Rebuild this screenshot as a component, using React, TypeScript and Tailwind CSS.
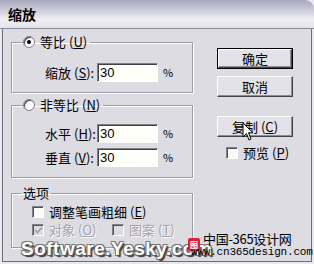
import type { ReactNode } from "react";

const cjk = "font-['Noto_Sans_CJK_SC',sans-serif]";

function Key({ k }: { k: string }) {
  return (
    <span className="ml-[3px]">
      (<span className="underline underline-offset-1">{k}</span>)
    </span>
  );
}

function Radio({ checked }: { checked?: boolean }) {
  return (
    <span className="flex h-[12px] w-[12px] items-center justify-center rounded-full border border-[#808088] bg-white shadow-[inset_1px_1px_0_#404048]">
      {checked && <span className="h-[4px] w-[4px] rounded-full bg-black" />}
    </span>
  );
}

function Check({ checked, disabled }: { checked?: boolean; disabled?: boolean }) {
  return (
    <span
      className={`flex h-[12px] w-[12px] items-center justify-center border border-t-[#808088] border-l-[#808088] border-r-white border-b-white shadow-[inset_1px_1px_0_#50505a] ${
        disabled ? "bg-[#dcdce2]" : "bg-[#fbfbf6]"
      }`}
    >
      {checked && (
        <svg width="9" height="9" viewBox="0 0 9 9">
          <path d="M1 4 L3.5 6.5 L8 1.5" fill="none" stroke={disabled ? "#9a9aa4" : "#000"} strokeWidth="1.6" />
        </svg>
      )}
    </span>
  );
}

function Field({ label, k }: { label: string; k: string }) {
  return (
    <div className="flex h-[19px] items-center pl-[33px]">
      <span className="w-[52px] whitespace-nowrap">
        {label}
        <Key k={k} />:
      </span>
      <div className="flex h-[19px] w-[61px] items-center border border-t-[#808088] border-l-[#808088] border-r-white border-b-white bg-[#fffffa] pl-[2px] font-['Liberation_Sans',sans-serif] text-[13px] shadow-[inset_1px_1px_0_#40404a]">
        30
      </div>
      <span className="ml-[5px] text-[11px]">%</span>
    </div>
  );
}

function Group({ legend, className, children }: { legend: ReactNode; className: string; children: ReactNode }) {
  return (
    <fieldset className={`border border-[#9c9ca6] shadow-[1px_1px_0_#fff,inset_1px_1px_0_#fff] ${className}`}>
      {legend}
      {children}
    </fieldset>
  );
}

function Button({ children, def, className }: { children: ReactNode; def?: boolean; className?: string }) {
  const face = (
    <div className="flex h-full w-full items-center justify-center border border-t-white border-l-white border-r-[#44444c] border-b-[#44444c] bg-[#e2e2e8] shadow-[inset_-1px_-1px_0_#8c8c96]">
      {children}
    </div>
  );
  return (
    <div className={`h-[21px] w-[76px] ${def ? "border border-black" : ""} ${className ?? ""}`}>{face}</div>
  );
}

export default function App() {
  return (
    <div className={`relative flex h-[264px] w-[314px] flex-col overflow-hidden bg-[#e8e8ee] text-[13px] text-black ${cjk}`}>
      <div className="flex h-[29px] shrink-0 items-center rounded-tr-[9px] border-b border-[#8a8a98] bg-linear-to-b from-[#a8a7bd] via-[#efeff5] via-70% to-[#e2e2ea] pl-[8px] text-[14px] font-bold">
        缩放
      </div>
      <div className="mx-[2px] mb-[2px] flex flex-1 border-x border-b border-[#6c6c78] bg-[#dcdce2]">
        <div className="flex w-[190px] flex-col pl-[8px] pt-[6px]">
          <Group
            className="h-[58px] pt-[14px]"
            legend={
              <legend className="ml-[11px] flex h-[14px] items-center gap-[5px] pr-[3px]">
                <Radio checked />
                <span>
                  等比<Key k="U" />
                </span>
              </legend>
            }
          >
            <Field label="缩放" k="S" />
          </Group>
          <Group
            className="mt-[5px] h-[80px] pt-[12px]"
            legend={
              <legend className="ml-[11px] flex h-[14px] items-center gap-[5px] pr-[3px]">
                <Radio />
                <span>
                  非等比<Key k="N" />
                </span>
              </legend>
            }
          >
            <Field label="水平" k="H" />
            <div className="h-[5px]" />
            <Field label="垂直" k="V" />
          </Group>
          <Group
            className="mt-[8px] h-[62px] pt-[5px]"
            legend={<legend className="ml-[10px] flex h-[14px] items-center px-[1px]">选项</legend>}
          >
            <div className="flex h-[14px] items-center gap-[5px] pl-[20px]">
              <Check />
              <span>
                调整笔画粗细<Key k="E" />
              </span>
            </div>
            <div className="mt-[4px] flex h-[14px] items-center pl-[20px] text-[#a2a2ac] [text-shadow:1px_1px_0_#fff]">
              <div className="flex w-[80px] items-center gap-[5px]">
                <Check checked disabled />
                <span>
                  对象<Key k="O" />
                </span>
              </div>
              <div className="flex items-center gap-[5px]">
                <Check disabled />
                <span>
                  图案<Key k="T" />
                </span>
              </div>
            </div>
          </Group>
        </div>
        <div className="ml-[24px] flex flex-col pt-[19px]">
          <Button def>确定</Button>
          <Button className="mt-[7px]">取消</Button>
          <Button className="mt-[19px]">
            复制<Key k="C" />
          </Button>
          <div className="mt-[10px] flex h-[12px] items-center gap-[5px] pl-[9px]">
            <Check />
            <span>
              预览<Key k="P" />
            </span>
          </div>
        </div>
      </div>

      {/* watermarks over the dialog */}
      <div className="absolute left-[21px] top-[235px] font-['Liberation_Sans',sans-serif] text-[19px] font-black tracking-[0.5px] text-white [text-shadow:1px_1px_0_#555,-1px_-1px_0_#777,1px_-1px_0_#777,-1px_1px_0_#777,2px_2px_1px_#333]">
        Software.Yesky.com
      </div>
      <div className="absolute left-[188px] top-[238px] flex h-[13px] w-[12px] items-center justify-center rounded-[2px] bg-[#e0202c] text-[8px] font-bold leading-none text-white">
        图
      </div>
      <div className="absolute left-[203px] top-[231px] text-[13px] leading-[16px] tracking-[-0.3px] text-black">中国-365设计网</div>
      <div className="absolute left-[191px] top-[246px] font-['Liberation_Mono',monospace] text-[11px] leading-[13px] tracking-[-0.2px] text-black">
        www.cn365design.com.
      </div>
      <svg className="absolute left-[242px] top-[122px]" width="12" height="20" viewBox="0 0 12 20">
        <path d="M1 1 L1 15 L4.5 11.5 L7 18 L9 17 L6.5 10.8 L11 10.8 Z" fill="#fff" stroke="#000" strokeWidth="1" strokeLinejoin="miter" />
      </svg>
    </div>
  );
}
